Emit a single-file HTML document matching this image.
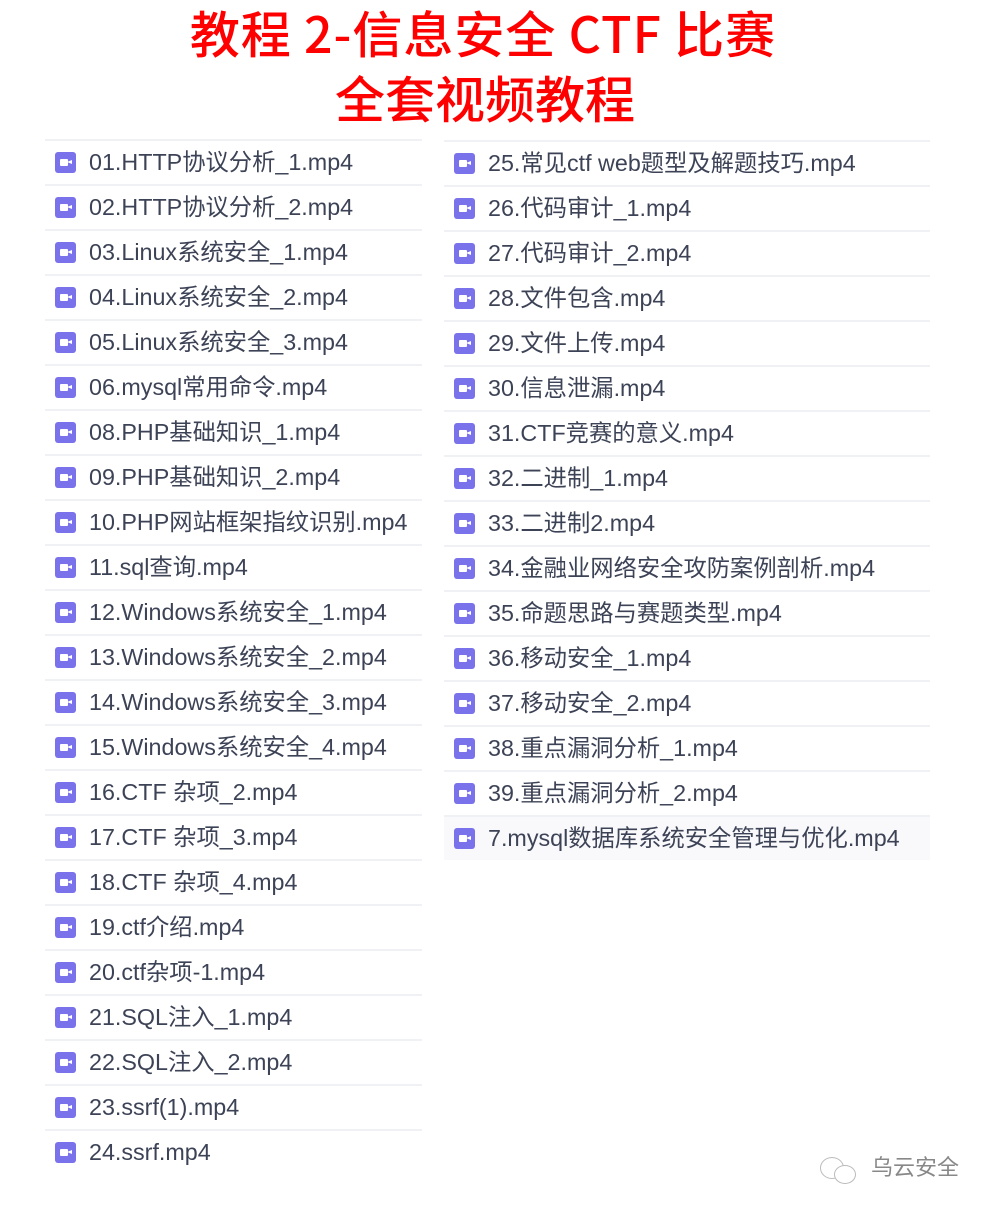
<!DOCTYPE html>
<html><head><meta charset="utf-8"><style>
body{margin:0;width:996px;height:1212px;background:#fff;position:relative;overflow:hidden;font-family:"Liberation Sans","Noto Sans CJK SC",sans-serif}
.t{position:absolute;left:0;width:966px;text-align:center;color:#f00;font-weight:500;font-size:50px;font-family:"Noto Sans CJK SC",sans-serif;line-height:60px;white-space:nowrap}
.r{position:absolute;height:45px;border-top:2px solid #f0f1f4;box-sizing:border-box}
.r .i{position:absolute;left:10px;top:11px;width:21px;height:21px;background:#7a72ea;border-radius:3px}
.r .i:before{content:"";position:absolute;left:5px;top:7px;width:8px;height:7px;background:#fff;border-radius:1px}
.r .i:after{content:"";position:absolute;left:12px;top:8px;border-right:5px solid #fff;border-top:2.5px solid transparent;border-bottom:2.5px solid transparent}
.r span{position:absolute;left:44px;top:6px;font-size:23.3px;color:#3d4356;line-height:30px;white-space:nowrap}
.L{left:45px;width:377px}.R{left:444px;width:486px}
</style></head><body>
<div class="t" style="top:2px;letter-spacing:1px">教程 2-信息安全 CTF 比赛</div>
<div class="t" style="top:67px;left:2px">全套视频教程</div>
<div id="c"></div>
<div style="position:absolute;left:820px;top:1155px;font-size:22px;color:#888;font-family:'Noto Sans CJK SC',sans-serif">
<span style="position:absolute;left:0;top:2px;width:22px;height:20px;border:1px solid #bbb;border-radius:50%"></span>
<span style="position:absolute;left:14px;top:10px;width:20px;height:17px;border:1px solid #bbb;border-radius:50%;background:#fff"></span>
<span style="position:absolute;left:51px;top:-5px;white-space:nowrap">乌云安全</span></div>
<script>
var L=["01.HTTP协议分析_1.mp4","02.HTTP协议分析_2.mp4","03.Linux系统安全_1.mp4","04.Linux系统安全_2.mp4","05.Linux系统安全_3.mp4","06.mysql常用命令.mp4","08.PHP基础知识_1.mp4","09.PHP基础知识_2.mp4","10.PHP网站框架指纹识别.mp4","11.sql查询.mp4","12.Windows系统安全_1.mp4","13.Windows系统安全_2.mp4","14.Windows系统安全_3.mp4","15.Windows系统安全_4.mp4","16.CTF 杂项_2.mp4","17.CTF 杂项_3.mp4","18.CTF 杂项_4.mp4","19.ctf介绍.mp4","20.ctf杂项-1.mp4","21.SQL注入_1.mp4","22.SQL注入_2.mp4","23.ssrf(1).mp4","24.ssrf.mp4"];
var R=["25.常见ctf web题型及解题技巧.mp4","26.代码审计_1.mp4","27.代码审计_2.mp4","28.文件包含.mp4","29.文件上传.mp4","30.信息泄漏.mp4","31.CTF竞赛的意义.mp4","32.二进制_1.mp4","33.二进制2.mp4","34.金融业网络安全攻防案例剖析.mp4","35.命题思路与赛题类型.mp4","36.移动安全_1.mp4","37.移动安全_2.mp4","38.重点漏洞分析_1.mp4","39.重点漏洞分析_2.mp4","7.mysql数据库系统安全管理与优化.mp4"];
var h="";
L.forEach(function(s,i){h+='<div class="r L" style="top:'+(139+45*i)+'px"><div class="i"></div><span>'+s+'</span></div>';});
R.forEach(function(s,i){h+='<div class="r R" style="top:'+(140+45*i)+'px'+(i==15?';background:#f9f9fb':'')+'"><div class="i"></div><span>'+s+'</span></div>';});
document.getElementById("c").innerHTML=h;
</script>
</body></html>
